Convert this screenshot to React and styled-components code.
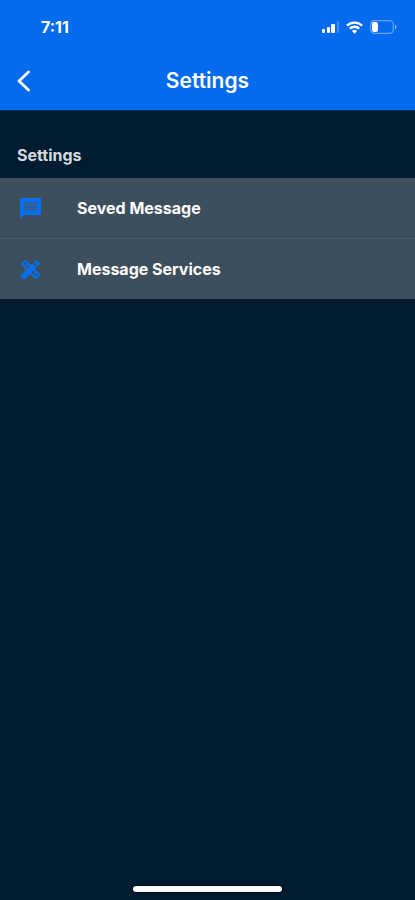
import React from "react";
import styled, { createGlobalStyle } from "styled-components";
import { MdDesignServices } from "react-icons/md";

const GlobalStyle = createGlobalStyle`
  *, *::before, *::after { box-sizing: border-box; }
  body {
    margin: 0;
    background: #001c30;
    color: #fff;
    font-family: Inter, "Liberation Sans", sans-serif;
  }
`;

const Screen = styled.div`
  min-height: 100vh;
  display: flex;
  flex-direction: column;
  background: #001c30;
`;

const Header = styled.header`
  background: #046bee;
  border-bottom: 1px solid #02315f;
`;

const StatusBar = styled.div`
  display: flex;
  align-items: center;
  justify-content: space-between;
  height: 52px;
  padding: 2px 18px 0 41px;
`;

const Time = styled.time`
  font-size: 16px;
  line-height: 20px;
  font-weight: 700;
`;

const StatusIcons = styled.div`
  display: flex;
  align-items: center;
  gap: 7px;
`;

const TitleBar = styled.div`
  display: grid;
  grid-template-columns: 48px 1fr 48px;
  align-items: center;
  height: 58px;
`;

const BackButton = styled.button`
  display: flex;
  align-items: center;
  height: 48px;
  padding: 0 0 0 16px;
  border: 0;
  background: none;
  color: #fff;
  cursor: pointer;
`;

const Title = styled.h1`
  margin: 0;
  text-align: center;
  font-size: 21px;
  line-height: 28px;
  font-weight: 600;
`;

const Main = styled.main`
  flex: 1;
`;

const SectionTitle = styled.h2`
  margin: 0;
  padding: 32px 17px 10px;
  color: #d6d9dc;
  font-size: 16px;
  line-height: 25px;
  font-weight: 700;
`;

const List = styled.ul`
  margin: 0;
  padding: 0;
  list-style: none;
  background: #3d4e5d;
`;

const Item = styled.li`
  & + & {
    border-top: 1px solid #4c5c6a;
  }
`;

const RowButton = styled.button`
  display: flex;
  align-items: center;
  width: 100%;
  height: 60px;
  padding: 0 18px;
  border: 0;
  background: none;
  color: #fff;
  font-family: inherit;
  font-size: 16px;
  line-height: 24px;
  font-weight: 700;
  text-align: left;
  cursor: pointer;
`;

const RowIcon = styled.span`
  display: flex;
  width: 59px;
  color: #086ff0;
`;

const Footer = styled.footer`
  display: flex;
  justify-content: center;
  padding-bottom: 8px;
`;

const HomeIndicator = styled.div`
  width: 36%;
  height: 6px;
  border-radius: 3px;
  background: #fff;
  box-shadow: 0 0 1px 1px #000c18;
`;

const SignalIcon = () => (
  <svg width="17" height="12" viewBox="0 0 17 12" fill="#fff" aria-hidden="true">
    <rect x="0" y="8" width="3" height="4" rx="1" />
    <rect x="5" y="6" width="3" height="6" rx="1" />
    <rect x="9" y="3" width="4" height="9" rx="1" />
    <rect x="15" y="0" width="2" height="12" rx="1" opacity="0.25" />
  </svg>
);

const WifiIcon = () => (
  <svg width="17" height="13" viewBox="0 0 17 13" fill="none" stroke="#fff" strokeWidth="2.4" aria-hidden="true">
    <path d="M1 4.7a10.8 10.8 0 0 1 15 0" />
    <path d="M3.8 7.6a6.8 6.8 0 0 1 9.4 0" />
    <path d="M8.5 12.8 5.9 10a3.8 3.8 0 0 1 5.2 0Z" fill="#fff" stroke="none" />
  </svg>
);

const BatteryIcon = () => (
  <svg width="27" height="14" viewBox="0 0 27 14" aria-hidden="true">
    <rect x="0.7" y="0.7" width="22.6" height="12.6" rx="3.7" fill="none" stroke="#fff" strokeOpacity="0.4" strokeWidth="1.2" />
    <rect x="2" y="2" width="6" height="10" rx="2" fill="#fff" />
    <path d="M25 4.5c2 .9 2 4.1 0 5Z" fill="#fff" fillOpacity="0.5" />
  </svg>
);

const BackIcon = () => (
  <svg width="16" height="22" viewBox="0 0 16 22" fill="none" stroke="#fff" strokeWidth="2.8" strokeLinecap="round" strokeLinejoin="round" aria-hidden="true">
    <path d="M12.5 2 3 11l9.5 9" />
  </svg>
);

const MessageIcon = ({ size }) => (
  <svg width={size} height={size} viewBox="0 0 25 25" fill="currentColor" aria-hidden="true">
    <path d="M3 2h19a1 1 0 0 1 1 1v15a1 1 0 0 1-1 1H6l-4 4V3a1 1 0 0 1 1-1Z" />
    <path d="M6 6h13v9H6Z" fill="#2f62a4" />
    <path d="M6 11h13v1H6Z" fill="#1b5bb0" />
  </svg>
);

const items = [
  { label: "Seved Message", Icon: MessageIcon },
  { label: "Message Services", Icon: MdDesignServices },
];

export default function App() {
  return (
    <Screen>
      <GlobalStyle />
      <Header>
        <StatusBar>
          <Time>7:11</Time>
          <StatusIcons>
            <SignalIcon />
            <WifiIcon />
            <BatteryIcon />
          </StatusIcons>
        </StatusBar>
        <TitleBar>
          <BackButton type="button" aria-label="Back">
            <BackIcon />
          </BackButton>
          <Title>Settings</Title>
        </TitleBar>
      </Header>
      <Main>
        <SectionTitle>Settings</SectionTitle>
        <List>
          {items.map(({ label, Icon }) => (
            <Item key={label}>
              <RowButton type="button">
                <RowIcon>
                  <Icon size={25} aria-hidden="true" />
                </RowIcon>
                {label}
              </RowButton>
            </Item>
          ))}
        </List>
      </Main>
      <Footer>
        <HomeIndicator />
      </Footer>
    </Screen>
  );
}
